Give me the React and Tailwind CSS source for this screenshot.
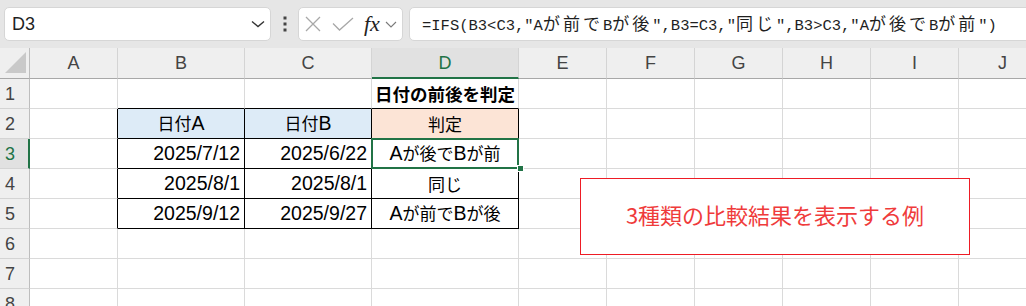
import React from "react";

const ASCII = /^[\x00-\x7F]/;
function Mixed({ text, latin, cjk }) {
  const parts = text.match(/[\x00-\x7F]+|[^\x00-\x7F]+/g) || [];
  return (
    <>
      {parts.map((p, i) => (
        <span key={i} className={ASCII.test(p) ? latin : cjk}>
          {p}
        </span>
      ))}
    </>
  );
}

const CELL_LATIN = "font-['Liberation_Sans',sans-serif] text-[19.5px]";
const CELL_CJK = "font-['Noto_Sans_CJK_JP',sans-serif] text-[17px]";
const CELL_CJK_BOLD = "font-['Noto_Sans_CJK_JP',sans-serif] text-[17.5px] font-bold";
const F_LATIN = "font-['Liberation_Mono',monospace] text-[15.5px]";
const F_CJK = "font-['Noto_Sans_CJK_JP',sans-serif] text-[17px] tracking-[3px]";

const COLS = [
  { k: "A", w: "w-[88px]" },
  { k: "B", w: "w-[127px]" },
  { k: "C", w: "w-[127px]" },
  { k: "D", w: "w-[147px]" },
  { k: "E", w: "w-[88px]" },
  { k: "F", w: "w-[88px]" },
  { k: "G", w: "w-[88px]" },
  { k: "H", w: "w-[88px]" },
  { k: "I", w: "w-[88px]" },
  { k: "J", w: "w-[88px]" },
];

const DATA = {
  "1D": { t: "日付の前後を判定", bold: true },
  "2B": { t: "日付A", bg: "bg-[#ddebf7]" },
  "2C": { t: "日付B", bg: "bg-[#ddebf7]" },
  "2D": { t: "判定", bg: "bg-[#fce4d6]" },
  "3B": { t: "2025/7/12", right: true },
  "3C": { t: "2025/6/22", right: true },
  "3D": { t: "Aが後でBが前" },
  "4B": { t: "2025/8/1", right: true },
  "4C": { t: "2025/8/1", right: true },
  "4D": { t: "同じ" },
  "5B": { t: "2025/9/12", right: true },
  "5C": { t: "2025/9/27", right: true },
  "5D": { t: "Aが前でBが後" },
};

const TABLE_COLS = ["B", "C", "D"];

function Cell({ r, c }) {
  const d = DATA[`${r}${c.k}`];
  const inTable = r >= 2 && r <= 5 && TABLE_COLS.includes(c.k);
  const rightBlack = inTable || (c.k === "A" && r >= 2 && r <= 5);
  const bottomBlack = inTable || (r === 1 && TABLE_COLS.includes(c.k));
  const selected = r === 3 && c.k === "D";
  const cls = [
    "relative h-[30px] shrink-0 border-r border-b flex items-center leading-none whitespace-nowrap text-black",
    c.w,
    rightBlack ? "border-r-black" : "border-r-[#dadada]",
    bottomBlack ? "border-b-black" : "border-b-[#dadada]",
    d && d.bg ? d.bg : "",
    d && d.right ? "justify-end pr-[4px]" : "justify-center",
  ].join(" ");
  return (
    <div className={cls}>
      {d && (
        <span className="leading-none">
          <Mixed text={d.t} latin={d.bold ? CELL_LATIN + " font-bold" : CELL_LATIN} cjk={d.bold ? CELL_CJK_BOLD : CELL_CJK} />
        </span>
      )}
      {selected && (
        <>
          <div className="absolute left-[-1px] top-[-1px] w-[148px] h-[31px] border-2 border-[#217346] z-10" />
          <div className="absolute left-[145px] top-[26px] w-[7px] h-[7px] bg-[#217346] border border-white z-20" />
        </>
      )}
    </div>
  );
}

function RowHeader({ r }) {
  const sel = r === 3;
  return (
    <div
      className={
        sel
          ? "w-[30px] h-[30px] shrink-0 flex items-center pl-[5px] bg-[#e1e1e1] border-b border-b-[#d4d4d4] border-r-2 border-r-[#217346] text-[#217346] font-['Liberation_Sans',sans-serif] text-[18px] leading-none"
          : "w-[30px] h-[30px] shrink-0 flex items-center pl-[5px] bg-[#efefef] border-b border-b-[#d4d4d4] border-r border-r-[#bdbdbd] text-[#444444] font-['Liberation_Sans',sans-serif] text-[18px] leading-none"
      }
    >
      {r}
    </div>
  );
}

function HeaderRow() {
  return (
    <div className="flex h-[31px] bg-[#efefef]">
      <div className="w-[30px] h-[31px] shrink-0 border-r border-r-[#bdbdbd] border-b border-b-[#a8a8a8] flex items-center justify-center">
        <svg width="24" height="24" viewBox="0 0 24 24">
          <polygon points="23,1 23,22 2,22" fill="#c9c9c9" />
        </svg>
      </div>
      {COLS.map((c) =>
        c.k === "D" ? (
          <div
            key={c.k}
            className={`${c.w} h-[31px] shrink-0 bg-[#e1e1e1] border-r border-r-[#d4d4d4] border-b-2 border-b-[#217346] flex items-center justify-center text-[#217346] font-['Liberation_Sans',sans-serif] text-[18px] leading-none`}
          >
            {c.k}
          </div>
        ) : (
          <div
            key={c.k}
            className={`${c.w} h-[31px] shrink-0 border-r border-r-[#d4d4d4] border-b border-b-[#a8a8a8] flex items-center justify-center text-[#444444] font-['Liberation_Sans',sans-serif] text-[18px] leading-none`}
          >
            {c.k}
          </div>
        )
      )}
    </div>
  );
}

function Toolbar() {
  const formula = '=IFS(B3<C3,"Aが前でBが後",B3=C3,"同じ",B3>C3,"Aが後でBが前")';
  return (
    <div className="h-[48px] bg-[#e6e6e6] flex items-start pt-[7px] pl-[4px] overflow-hidden">
      <div className="w-[267px] h-[34px] shrink-0 bg-white rounded-[5px] border border-[#d6d6d6] flex items-center pl-[7px] pr-[5px]">
        <span className="flex-1 font-['Liberation_Sans',sans-serif] text-[18px] text-[#1f1f1f] leading-none">D3</span>
        <svg width="14" height="8" viewBox="0 0 14 8">
          <polyline points="1,1.5 7,6.5 13,1.5" fill="none" stroke="#333333" strokeWidth="1.4" />
        </svg>
      </div>
      <div className="w-[27px] h-[34px] shrink-0 flex items-center justify-center">
        <svg width="4" height="16" viewBox="0 0 4 16">
          <rect x="0.5" y="0.5" width="3" height="3" fill="#444444" />
          <rect x="0.5" y="6.5" width="3" height="3" fill="#444444" />
          <rect x="0.5" y="12.5" width="3" height="3" fill="#444444" />
        </svg>
      </div>
      <div className="w-[105px] h-[34px] shrink-0 bg-white rounded-[5px] border border-[#d6d6d6] flex items-center pl-[6px]">
        <svg width="16" height="16" viewBox="0 0 16 16">
          <path d="M1 1 L15 15 M15 1 L1 15" stroke="#a8a8a8" strokeWidth="1.3" fill="none" />
        </svg>
        <svg className="ml-[11px]" width="22" height="14" viewBox="0 0 22 14">
          <polyline points="1,6.5 7.5,13 21,1" fill="none" stroke="#a8a8a8" strokeWidth="1.3" />
        </svg>
        <span className="ml-[10px] font-['Liberation_Serif',serif] italic text-[22px] text-[#222222] leading-none">
          fx
        </span>
        <svg className="ml-[5px]" width="12" height="7" viewBox="0 0 12 7">
          <polyline points="1,1 6,6 11,1" fill="none" stroke="#7a7a7a" strokeWidth="1.1" />
        </svg>
      </div>
      <div className="ml-[6px] w-[640px] h-[34px] shrink-0 bg-white rounded-[5px] border border-[#d6d6d6] flex items-center pl-[12px] whitespace-nowrap leading-none text-[#1f1f1f]">
        <span>
          <Mixed text={formula} latin={F_LATIN} cjk={F_CJK} />
        </span>
      </div>
    </div>
  );
}

export default function App() {
  const rows = [1, 2, 3, 4, 5, 6, 7, 8];
  return (
    <div className="relative w-[1026px] h-[306px] overflow-hidden bg-white">
      <Toolbar />
      <HeaderRow />
      {rows.map((r) => (
        <div key={r} className="flex h-[30px]">
          <RowHeader r={r} />
          {COLS.map((c) => (
            <Cell key={c.k} r={r} c={c} />
          ))}
        </div>
      ))}
      <div className="absolute left-[580px] top-[178px] w-[390px] h-[77px] border border-[#ee1c25] bg-white flex items-center justify-center z-30">
        <span className="font-['Noto_Sans_CJK_JP',sans-serif] text-[22px] text-[#ef3b3b] leading-none -mt-[6px]">
          3種類の比較結果を表示する例
        </span>
      </div>
    </div>
  );
}
